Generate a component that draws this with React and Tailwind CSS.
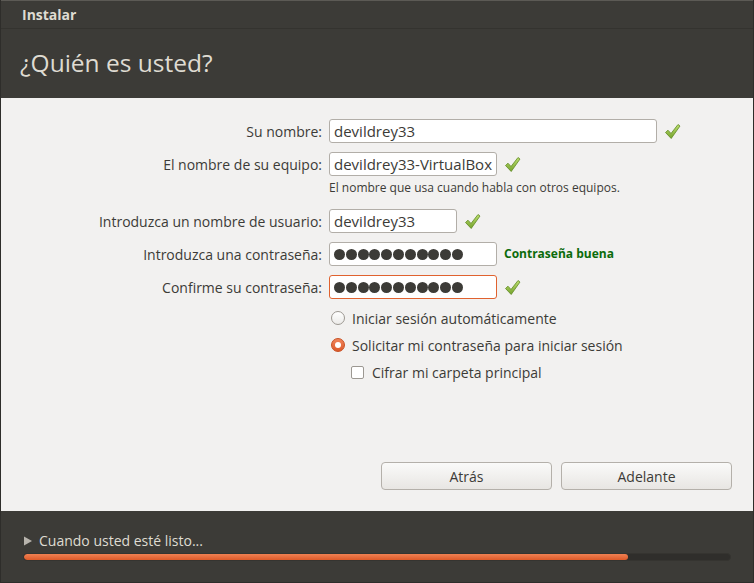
import React from 'react';

const font = { fontFamily: '"Open Sans", "Noto Sans", "DejaVu Sans", sans-serif' };

function Check() {
  return (
    <svg width="17" height="17" viewBox="0 0 17 17" className="shrink-0">
      <defs>
        <linearGradient id="ck" x1="0" y1="0" x2="0" y2="1">
          <stop offset="0" stopColor="#bfe070" />
          <stop offset="1" stopColor="#74a22c" />
        </linearGradient>
      </defs>
      <path
        d="M1.5 9.5 L4 7.2 L7 10.5 L14 1.5 L16 3 L7.2 15.5 Z"
        fill="url(#ck)"
        stroke="#5f8a22"
        strokeWidth="0.8"
        strokeLinejoin="round"
      />
    </svg>
  );
}

function Dots() {
  return (
    <div className="flex gap-[0.8px]">
      {Array.from({ length: 11 }).map((_, i) => (
        <span key={i} className="w-[11px] h-[11px] rounded-full bg-[#3c3b37]" />
      ))}
    </div>
  );
}

function Row({ label, children, className = '' }) {
  return (
    <div className={`flex items-center ${className}`}>
      <div className="w-[321px] text-right text-[14px] text-[#3c3b37] shrink-0">{label}</div>
      <div className="ml-[7px] flex items-center">{children}</div>
    </div>
  );
}

const inputCls =
  'h-[24px] bg-white border border-[#b2aea8] rounded-[3px] flex items-center px-[4px] text-[15px] text-[#3c3b37]';

export default function App() {
  return (
    <div style={font} className="w-[754px] h-[583px] flex flex-col bg-[#3c3b37] border-x border-[#2e2d2a] overflow-hidden">
      {/* title bar */}
      <div className="h-[29px] shrink-0 border-t border-[#5c5a55] border-b border-b-[#34332f] flex items-center pl-[21px]">
        <span className="text-[14px] font-bold text-[#dfdbd2]">Instalar</span>
      </div>
      {/* header */}
      <div className="h-[69px] shrink-0 flex items-center pl-[19px]">
        <h1 className="text-[24.5px] text-[#dfdbd2] leading-none">¿Quién es usted?</h1>
      </div>
      {/* content */}
      <div className="h-[413px] shrink-0 bg-[#f2f1f0] flex flex-col pt-[21px]">
        <Row label="Su nombre:">
          <div className={`${inputCls} w-[328px]`}>devildrey33</div>
          <div className="ml-[7px]"><Check /></div>
        </Row>
        <Row label="El nombre de su equipo:" className="mt-[9px]">
          <div className={`${inputCls} w-[168px]`}>devildrey33-VirtualBox</div>
          <div className="ml-[7px]"><Check /></div>
        </Row>
        <div className="ml-[328px] mt-[4px] text-[12px] text-[#3c3b37] leading-[16px]">
          El nombre que usa cuando habla con otros equipos.
        </div>
        <Row label="Introduzca un nombre de usuario:" className="mt-[13px]">
          <div className={`${inputCls} w-[128px]`}>devildrey33</div>
          <div className="ml-[7px]"><Check /></div>
        </Row>
        <Row label="Introduzca una contraseña:" className="mt-[9px]">
          <div className={`${inputCls} w-[168px]`}><Dots /></div>
          <span className="ml-[7px] text-[12px] font-bold text-[#0b6b0b]">Contraseña buena</span>
        </Row>
        <Row label="Confirme su contraseña:" className="mt-[9px]">
          <div className="h-[24px] w-[168px] bg-white border border-[#e0622f] rounded-[3px] flex items-center px-[4px]"><Dots /></div>
          <div className="ml-[7px]"><Check /></div>
        </Row>

        <div className="ml-[330px] mt-[8px] flex flex-col text-[14px] text-[#3c3b37]">
          <label className="flex items-center h-[22px]">
            <span className="w-[14px] h-[14px] rounded-full border border-[#9c9892] bg-gradient-to-b from-white to-[#ecebe9]" />
            <span className="ml-[7px]">Iniciar sesión automáticamente</span>
          </label>
          <label className="flex items-center h-[22px] mt-[5px]">
            <span className="w-[14px] h-[14px] rounded-full border border-[#c84f22] bg-gradient-to-b from-[#f0845a] to-[#dd5a2a] flex items-center justify-center">
              <span className="w-[6px] h-[6px] rounded-full bg-white" />
            </span>
            <span className="ml-[7px]">Solicitar mi contraseña para iniciar sesión</span>
          </label>
          <label className="flex items-center h-[22px] mt-[5px] ml-[20px]">
            <span className="w-[13px] h-[13px] rounded-[2px] border border-[#9c9892] bg-white" />
            <span className="ml-[8px]">Cifrar mi carpeta principal</span>
          </label>
        </div>

        <div className="mt-auto mb-[21px] flex justify-end gap-[9px] pr-[21px]">
          <button className="w-[171px] h-[28px] rounded-[4px] border border-[#b4b0aa] bg-gradient-to-b from-[#fafaf9] to-[#e8e6e3] text-[14px] text-[#3c3b37]">
            Atrás
          </button>
          <button className="w-[171px] h-[28px] rounded-[4px] border border-[#b4b0aa] bg-gradient-to-b from-[#fafaf9] to-[#e8e6e3] text-[14px] text-[#3c3b37]">
            Adelante
          </button>
        </div>
      </div>
      {/* footer */}
      <div className="flex-1 flex flex-col pl-[22px] pr-[22px] pt-[21px] border-b border-[#2e2d2a]">
        <div className="flex items-center text-[14px] text-[#dfdbd2] leading-[18px]">
          <svg width="10" height="10" viewBox="0 0 10 10" className="mr-[6px]">
            <path d="M1 0.5 L9 5 L1 9.5 Z" fill="#b8b4ad" />
          </svg>
          Cuando usted esté listo...
        </div>
        <div className="mt-[3px] h-[8px] rounded-full bg-[#2f2e2b] border border-[#353430] overflow-hidden">
          <div className="h-full rounded-full bg-gradient-to-b from-[#f08052] to-[#dd5a28]" style={{ width: '85.5%' }} />
        </div>
      </div>
    </div>
  );
}
